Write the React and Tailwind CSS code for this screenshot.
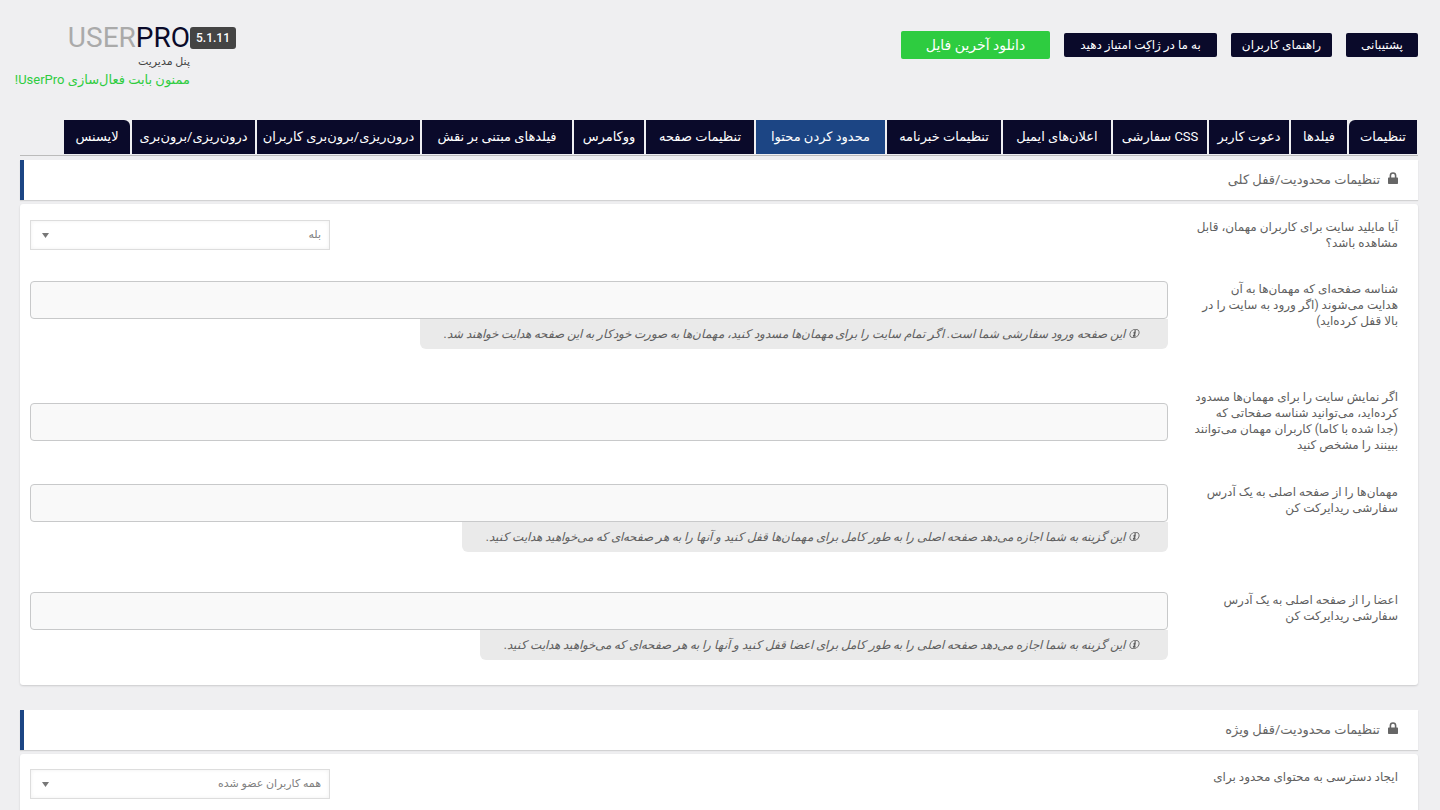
const links = [
  { label: "پشتیبانی", width: "w-[72px]" },
  { label: "راهنمای کاربران", width: "w-[101px]" },
  { label: "به ما در ژاکِت امتیاز دهید", width: "w-[153px]" },
];

const tabs = [
  { label: "تنظیمات", width: "w-[68px]", shape: "rounded-tl-md" },
  { label: "فیلدها", width: "w-[56px]" },
  { label: "دعوت کاربر", width: "w-[80px]" },
  { label: "CSS سفارشی", width: "w-[94px]" },
  { label: "اعلان‌های ایمیل", width: "w-[108px]" },
  { label: "تنظیمات خبرنامه", width: "w-[114px]" },
  { label: "محدود کردن محتوا", width: "w-[129px]", active: true },
  { label: "تنظیمات صفحه", width: "w-[108px]" },
  { label: "ووکامرس", width: "w-[70px]" },
  { label: "فیلدهای مبتنی بر نقش", width: "w-[150px]" },
  { label: "درون‌ریزی/برون‌بری کاربران", width: "w-[163px]" },
  { label: "درون‌ریزی/برون‌بری", width: "w-[123px]" },
  { label: "لایسنس", width: "w-[66px]", shape: "rounded-tr-md" },
];

function LockIcon() {
  return (
    <svg
      viewBox="0 0 10 12"
      className="mb-1 h-3 w-[10px] shrink-0"
      aria-hidden="true"
    >
      <path
        d="M2.4 6V3.6a2.6 2.6 0 0 1 5.2 0V6"
        fill="none"
        stroke="currentColor"
        strokeWidth="1.6"
      />
      <rect y="5.5" width="10" height="6.5" rx=".7" fill="currentColor" />
    </svg>
  );
}

function InfoIcon() {
  return (
    <svg
      viewBox="0 0 12 12"
      className="h-[11px] w-[11px] shrink-0"
      fill="none"
      stroke="currentColor"
      aria-hidden="true"
    >
      <ellipse cx="6" cy="6" rx="4.9" ry="4.5" transform="skewX(-14) translate(1.5 0)" />
      <path d="M4.9 5.2h1.5L5.7 8.5M4.3 8.6h2.8" strokeWidth="1.7" />
      <path d="M5.9 2.4h1.9l-.3 1.6H5.6z" fill="currentColor" stroke="none" />
    </svg>
  );
}

function Section({ title, children }) {
  return (
    <section>
      <h2 className="flex h-10 items-center gap-2 border-l-4 border-[#1c4584] bg-white pr-5 text-[13px] text-[#666] shadow-[0_1px_1px_rgba(0,0,0,0.12)]">
        <LockIcon />
        {title}
      </h2>
      <div className="mt-1 rounded-[3px] bg-white shadow-[0_1px_2px_rgba(0,0,0,0.15)]">
        {children}
      </div>
    </section>
  );
}

function Row({ id, label, labelClass = "", middle, children }) {
  return (
    <div className="flex gap-[26px] py-[15px] pr-5 pl-[10px]">
      <label
        htmlFor={id}
        className={`w-[204px] shrink-0 text-xs leading-4 whitespace-pre text-[#606060] ${labelClass}`}
      >
        {label}
      </label>
      <div className={middle ? "flex-1 self-center" : "flex-1"}>{children}</div>
    </div>
  );
}

function TextField({ id, hint }) {
  return (
    <>
      <input
        id={id}
        type="text"
        className="block h-[38px] w-full rounded border border-[#c8c9ca] bg-[#f9f9f9] px-3 text-sm"
      />
      {hint && (
        <p className="mb-[10px] flex h-[30px] w-fit items-center gap-1 rounded-b-md bg-[#eaeaea] pr-7 pb-px pl-6 text-xs whitespace-nowrap text-[#606060] italic">
          <InfoIcon />
          {hint}
        </p>
      )}
    </>
  );
}

function SelectField({ id, options }) {
  return (
    <div className="relative mr-auto w-[300px]">
      <select
        id={id}
        className="block h-[30px] w-full appearance-none border border-[#ddd] bg-white pr-2 pl-8 text-[11px] text-[#808080] shadow-[inset_0_0_4px_rgba(0,0,0,0.06)]"
      >
        {options.map((option) => (
          <option key={option}>{option}</option>
        ))}
      </select>
      <svg
        viewBox="0 0 7 6"
        className="pointer-events-none absolute top-[13px] left-3 h-[5px] w-[7px] fill-[#777]"
        preserveAspectRatio="none"
        aria-hidden="true"
      >
        <path d="M0 0h7L3.5 6z" />
      </svg>
    </div>
  );
}

export default function App() {
  return (
    <div
      dir="rtl"
      lang="fa"
      className="min-h-screen bg-[#efeff1] pr-[22px] pl-5 font-[Roboto,'DejaVu_Sans',sans-serif]"
    >
      <header className="flex h-[120px] items-start justify-between">
        <div className="flex items-center gap-[14px] pt-[31px]">
          {links.map((link) => (
            <a
              key={link.label}
              href="#"
              className={`flex h-6 items-center justify-center rounded-xs bg-[#0a0a2a] text-xs whitespace-nowrap text-white ${link.width}`}
            >
              {link.label}
            </a>
          ))}
          <a
            href="#"
            className="flex h-7 w-[149px] items-center justify-center rounded-xs bg-[#2ecc40] text-sm whitespace-nowrap text-white"
          >
            دانلود آخرین فایل
          </a>
        </div>

        <div className="flex items-start">
          <span className="mt-[27px] flex h-[22px] w-[46px] items-center justify-center rounded-[3px] bg-[#444] text-xs font-medium text-white">
            5.1.11
          </span>
          <div className="w-[170px] pt-[22px] whitespace-nowrap">
            <h1 dir="ltr" className="text-right text-[28px] leading-8 text-[#0a0a2a]">
              <span className="text-[#aaa]">USER</span>PRO
            </h1>
            <p className="text-[11px] leading-4 text-[#444]">پنل مدیریت</p>
            <p className="text-[13px] leading-5 text-[#2ecc40]">
              ممنون بابت فعال‌سازی UserPro!
            </p>
          </div>
        </div>
      </header>

      <nav className="flex gap-[2px] border-b border-[#bbb] pr-px pb-px">
        {tabs.map((tab) => (
          <a
            key={tab.label}
            href="#"
            className={`flex h-[34px] items-center justify-center pb-px text-[13px] whitespace-nowrap text-white ${tab.width} ${tab.shape || ""} ${tab.active ? "bg-[#1c4584]" : "bg-[#0a0a2a]"}`}
          >
            {tab.label}
          </a>
        ))}
      </nav>

      <main className="flex flex-col gap-[25px] pt-1">
        <Section title="تنظیمات محدودیت/قفل کلی">
          <Row
            id="site-visible"
            label={"آیا مایلید سایت برای کاربران مهمان، قابل\nمشاهده باشد؟"}
            middle
          >
            <SelectField id="site-visible" options={["بله", "خیر"]} />
          </Row>
          <Row
            id="guest-page"
            label={
              "شناسه صفحه‌ای که مهمان‌ها به آن\nهدایت می‌شوند (اگر ورود به سایت را در\nبالا قفل کرده‌اید)"
            }
          >
            <TextField
              id="guest-page"
              hint="این صفحه ورود سفارشی شما است. اگر تمام سایت را برای مهمان‌ها مسدود کنید، مهمان‌ها به صورت خودکار به این صفحه هدایت خواهند شد."
            />
          </Row>
          <Row
            id="allowed-pages"
            label={
              "اگر نمایش سایت را برای مهمان‌ها مسدود\nکرده‌اید، می‌توانید شناسه صفحاتی که\n(جدا شده با کاما) کاربران مهمان می‌توانند\nببینند را مشخص کنید"
            }
            labelClass="pb-px"
            middle
          >
            <TextField id="allowed-pages" />
          </Row>
          <Row
            id="guest-redirect"
            label={"مهمان‌ها را از صفحه اصلی به یک آدرس\nسفارشی ریدایرکت کن"}
          >
            <TextField
              id="guest-redirect"
              hint="این گزینه به شما اجازه می‌دهد صفحه اصلی را به طور کامل برای مهمان‌ها قفل کنید و آنها را به هر صفحه‌ای که می‌خواهید هدایت کنید."
            />
          </Row>
          <Row
            id="member-redirect"
            label={"اعضا را از صفحه اصلی به یک آدرس\nسفارشی ریدایرکت کن"}
          >
            <TextField
              id="member-redirect"
              hint="این گزینه به شما اجازه می‌دهد صفحه اصلی را به طور کامل برای اعضا قفل کنید و آنها را به هر صفحه‌ای که می‌خواهید هدایت کنید."
            />
          </Row>
        </Section>

        <Section title="تنظیمات محدودیت/قفل ویژه">
          <Row id="access-for" label="ایجاد دسترسی به محتوای محدود برای" middle>
            <SelectField id="access-for" options={["همه کاربران عضو شده"]} />
          </Row>
        </Section>
      </main>
    </div>
  );
}
